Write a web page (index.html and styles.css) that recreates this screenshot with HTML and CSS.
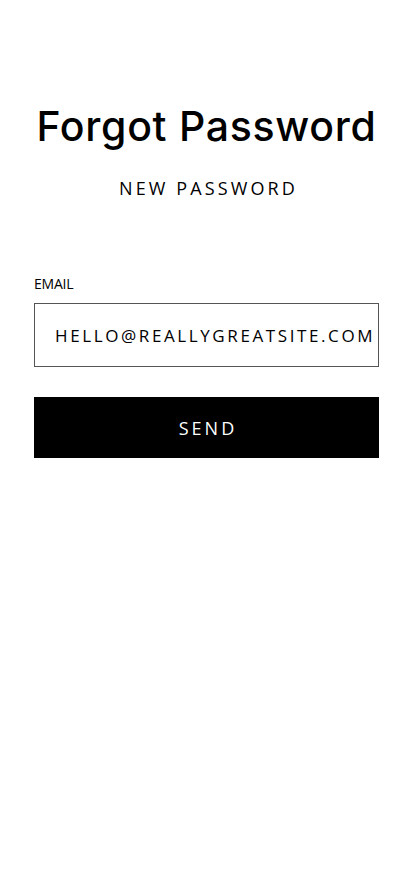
FILE: index.html
```html
<!DOCTYPE html>
<html lang="en">
<head>
<meta charset="utf-8">
<title>Forgot Password</title>
<link rel="stylesheet" href="styles.css">
</head>
<body>
<main class="page">
  <h1 class="title">Forgot Password</h1>
  <p class="subtitle">NEW PASSWORD</p>
  <form class="form">
    <label class="label" for="email">EMAIL</label>
    <div class="field" id="email">HELLO@REALLYGREATSITE.COM</div>
    <button class="send" type="button">SEND</button>
  </form>
</main>
</body>
</html>
```

FILE: styles.css
```css
* { box-sizing: border-box; }
html, body { margin: 0; padding: 0; background: #fff; }
body {
  font-family: "Open Sans", "Lato", sans-serif;
  color: #000;
  width: 414px;
  height: 896px;
}
.page {
  display: flex;
  flex-direction: column;
  padding: 100px 35px 0 34px;
}
.title {
  margin: 0;
  text-align: center;
  font-family: "Inter", "Open Sans", sans-serif;
  font-size: 41px;
  line-height: 52px;
  font-weight: 500;
  letter-spacing: 0.7px;
}
.subtitle {
  margin: 24px 0 0;
  text-align: center;
  font-size: 18px;
  line-height: 24px;
  letter-spacing: 3.1px;
  font-weight: 400;
  padding-left: 4px;
}
.form {
  display: flex;
  flex-direction: column;
  margin-top: 74px;
}
.label {
  font-size: 14px;
  line-height: 20px;
  letter-spacing: -0.2px;
  margin-bottom: 9px;
}
.field {
  height: 64px;
  border: 1.5px solid #555;
  display: flex;
  align-items: center;
  padding-left: 20px;
  font-size: 17px;
  letter-spacing: 2.6px;
  white-space: nowrap;
  overflow: hidden;
}
.send {
  margin-top: 30px;
  height: 61px;
  border: none;
  background: #000;
  color: #fff;
  font-family: inherit;
  font-size: 18px;
  letter-spacing: 3px;
  padding: 0 0 0 3px;
}
```
